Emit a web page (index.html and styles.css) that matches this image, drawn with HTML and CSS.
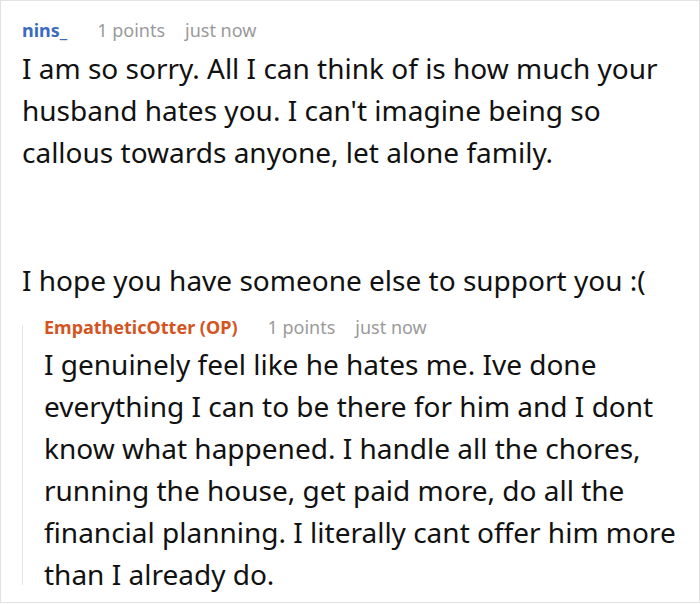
FILE: index.html
```html
<!DOCTYPE html>
<html>
<head>
<meta charset="utf-8">
<link rel="stylesheet" href="styles.css">
</head>
<body>
<div class="frame">
  <div class="comment">
    <div class="meta">
      <span class="user">nins_</span>
      <span class="info">1 points</span>
      <span class="info">just now</span>
    </div>
    <div class="body">
      <p>I am so sorry. All I can think of is how much your husband hates you. I can't imagine being so callous towards anyone, let alone family.</p>
      <p>I hope you have someone else to support you :(</p>
    </div>
    <div class="reply">
      <div class="rail"></div>
      <div class="reply-content">
        <div class="meta">
          <span class="user op">EmpatheticOtter (OP)</span>
          <span class="info">1 points</span>
          <span class="info">just now</span>
        </div>
        <div class="body">
          <p>I genuinely feel like he hates me. Ive done everything I can to be there for him and I dont know what happened. I handle all the chores, running the house, get paid more, do all the financial planning. I literally cant offer him more than I already do.</p>
        </div>
      </div>
    </div>
  </div>
</div>
</body>
</html>
```
FILE: styles.css
```css
html, body {
  margin: 0;
  padding: 0;
  background: #fff;
}
.frame {
  box-sizing: border-box;
  width: 700px;
  height: 603px;
  border: 1px solid #e2e2e2;
  overflow: hidden;
  font-family: "Noto Sans", "Open Sans", sans-serif;
}
.comment {
  padding: 16px 14px 0 21px;
}
.meta {
  display: flex;
  gap: 20px;
  align-items: baseline;
  font-size: 18px;
  line-height: 26px;
}
.user {
  font-weight: 700;
  color: #3a6bbd;
  margin-right: 10px;
}
.user.op {
  color: #d4541f;
}
.info {
  color: #9a9a9a;
}
.body {
  margin-top: 4px;
  font-size: 28px;
  line-height: 42px;
  color: #111;
}
.body p {
  margin: 0;
}
.comment > .body p:first-child {
  margin-bottom: 86px;
}
.reply {
  display: flex;
  gap: 21px;
  margin-top: 13px;
}
.rail {
  flex: 0 0 1px;
  background: #e4e4e4;
  margin: 11px 0 10px;
}
.reply-content {
  flex: 1;
  min-width: 0;
}
.reply .body {
  margin-top: 3px;
}
```
